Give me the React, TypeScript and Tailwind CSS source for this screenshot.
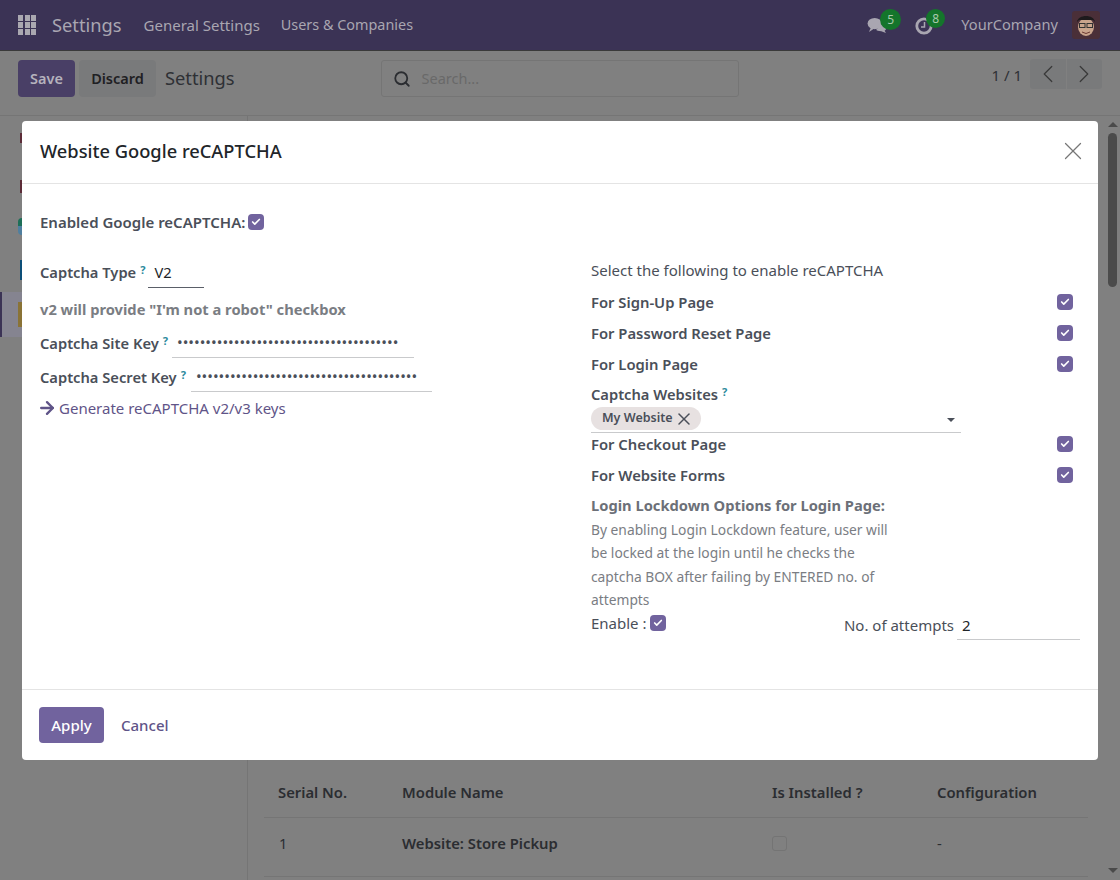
import { Search, ChevronLeft, ChevronRight, X, Check, ArrowRight } from "lucide-react";

const font = "font-['Noto_Sans','Open_Sans',sans-serif]";

function Tick() {
  return (
    <span className="flex h-4 w-4 shrink-0 items-center justify-center rounded-[4px] bg-[#71639e]">
      <Check size={10} strokeWidth={4} className="text-white" />
    </span>
  );
}

function Help() {
  return <sup className="relative -top-[4px] ml-1 text-[11px] font-bold text-[#2b8a9c]">?</sup>;
}

function CheckRow({ label }: { label: string }) {
  return (
    <div className="flex h-[31px] items-center justify-between pr-[7px] text-[14.8px] font-semibold text-[#4a4f59]">
      <span>{label}</span>
      <Tick />
    </div>
  );
}

function Apps() {
  return (
    <div className="grid w-[18px] grid-cols-3 gap-[1.5px]">
      {[0, 1, 2, 3, 4, 5, 6, 7, 8].map((i) => (
        <span key={i} className="h-[5.5px] w-[5px] bg-[#aaa8b0]" />
      ))}
    </div>
  );
}

function Avatar() {
  return (
    <svg width="28" height="28" viewBox="0 0 28 28" className="rounded-[3px]">
      <rect width="28" height="28" fill="#4a2f38" />
      <ellipse cx="14" cy="16" rx="8" ry="9" fill="#c9a48c" />
      <path d="M5 11C6 3 22 3 23 11L21 9H7Z" fill="#1d1a1c" />
      <rect x="7.5" y="12.5" width="5.5" height="4" fill="none" stroke="#333" strokeWidth="1" />
      <rect x="15" y="12.5" width="5.5" height="4" fill="none" stroke="#333" strokeWidth="1" />
      <path d="M10 21Q14 24 18 21" fill="none" stroke="#6b3a33" strokeWidth="1" />
    </svg>
  );
}

export default function App() {
  return (
    <div className={`${font} relative h-[880px] w-[1120px] overflow-hidden bg-[#808080] text-[15px]`}>
      {/* navbar */}
      <div className="flex h-[51px] items-center justify-between border-b border-[#3a3a3a] bg-[#3b3355] pl-[18px] pr-[20px]">
        <div className="flex items-center">
          <Apps />
          <span className="ml-[16px] text-[18.3px] text-[#a9a6b1]">Settings</span>
          <span className="ml-[22px] text-[15px] text-[#a9a6b1]">General Settings</span>
          <span className="ml-[21px] text-[14.4px] text-[#a9a6b1]">Users &amp; Companies</span>
        </div>
        <div className="flex items-center">
          <div className="relative mr-[14px] h-[28px] w-[34px]">
            <svg width="21" height="17" viewBox="0 0 22 18" className="absolute left-0 top-[6px]">
              <ellipse cx="8" cy="7" rx="7.5" ry="6" fill="#a9a6b1" />
              <path d="M4 11L2 16L8 12Z" fill="#a9a6b1" />
              <path d="M12 8.5C17 7 20.5 9 20.5 11.5C20.5 13 19.5 14 18.5 14.5L20 17L15 15C12 15 10 14 9.5 13.5C11 13 12 11 12 8.5Z" fill="#a9a6b1" />
            </svg>
            <span className="absolute -top-[2px] left-[13px] flex h-[21px] w-[21px] items-center justify-center rounded-full bg-[#14752b] text-[12px] text-[#a9c9ac]">5</span>
          </div>
          <div className="relative mr-[15px] h-[28px] w-[31px]">
            <svg width="18" height="18" viewBox="0 0 18 18" className="absolute left-0 top-[6px]">
              <circle cx="9" cy="9" r="7.2" fill="none" stroke="#a9a6b1" strokeWidth="2.8" />
              <path d="M9.5 5V10H6" fill="none" stroke="#a9a6b1" strokeWidth="1.5" />
            </svg>
            <span className="absolute -top-[2px] left-[11px] flex h-[19px] w-[19px] items-center justify-center rounded-full bg-[#14752b] text-[12px] text-[#a9c9ac]">8</span>
          </div>
          <span className="mr-[14px] text-[14.6px] text-[#a9a6b1]">YourCompany</span>
          <Avatar />
        </div>
      </div>

      {/* control panel */}
      <div className="flex h-[65px] items-start border-b border-[#757575] bg-[#808080] pl-[18px] pr-[18px] pt-[9px]">
        <button className="h-[37px] w-[57px] rounded-[4px] bg-[#493f66] text-[14.5px] font-semibold text-[#b5b2bd]">Save</button>
        <button className="ml-[4px] h-[37px] w-[77px] rounded-[4px] bg-[#797a7b] text-[14.5px] font-semibold text-[#1f2023]">Discard</button>
        <span className="ml-[9px] mt-[5px] text-[18.3px] leading-[26px] text-[#2e3035]">Settings</span>
        <div className="ml-[146px] flex h-[37px] w-[358px] items-center rounded-[3px] border border-[#757575] pl-[11px]">
          <Search size={18} strokeWidth={2.4} className="text-[#2b2d31]" />
          <span className="ml-[11px] text-[14.5px] text-[#696969]">Search...</span>
        </div>
        <span className="ml-auto mt-[4px] text-[15px] text-[#2e3035]">1 / 1</span>
        <div className="-mt-[1px] ml-[8px] flex h-[30px] w-[72px] gap-px">
          <span className="flex flex-1 items-center justify-center rounded-l-[3px] bg-[#797a7b]"><ChevronLeft size={30} strokeWidth={1} className="text-[#3a3a3a]" /></span>
          <span className="flex flex-1 items-center justify-center rounded-r-[3px] bg-[#797a7b]"><ChevronRight size={30} strokeWidth={1} className="text-[#3a3a3a]" /></span>
        </div>
      </div>

      {/* page behind the dialog */}
      <div className="flex h-[764px]">
        <div className="relative w-[248px] border-r border-[#757575]">
          <span className="absolute left-[20px] top-[17px] h-[10px] w-[2px] bg-[#5c2c38]" />
          <span className="absolute left-[20px] top-[64px] h-[13px] w-[2px] bg-[#5c2c38]" />
          <span className="absolute left-[18px] top-[102px] h-[8px] w-[4px] rounded-tl-full bg-[#1d6f58]" />
          <span className="absolute left-[18px] top-[110px] h-[9px] w-[4px] rounded-bl-full bg-[#4f7f9f]" />
          <span className="absolute left-[20px] top-[144px] h-[20px] w-[2px] bg-[#0d4f78]" />
          <span className="absolute left-0 top-[176px] h-[45px] w-[22px] border-l-2 border-[#3b3355] bg-[#858490]" />
          <span className="absolute left-[18px] top-[186px] h-[25px] w-[4px] bg-[#8a7336]" />
        </div>
        <div className="flex-1 pl-[16px] pr-[32px] pt-[651px] text-[14.8px] text-[#2b2d31]">
          <div className="flex h-[51px] items-center border-b border-[#757575] font-semibold">
            <span className="ml-[14px] w-[124px]">Serial No.</span>
            <span className="w-[370px]">Module Name</span>
            <span className="w-[165px]">Is Installed ?</span>
            <span>Configuration</span>
          </div>
          <div className="flex h-[59px] items-center border-b border-[#757575] pb-[7px]">
            <span className="ml-[15px] w-[123px] text-[14.5px]">1</span>
            <span className="w-[370px] font-semibold">Website: Store Pickup</span>
            <span className="w-[165px]"><span className="block h-[15px] w-[15px] rounded-[3px] border border-[#747474]" /></span>
            <span>-</span>
          </div>
        </div>
      </div>

      {/* window scrollbar */}
      <div className="absolute right-0 top-[116px] flex h-[764px] w-[15px] flex-col items-center">
        <span className="mt-[6px] h-0 w-0 border-x-[5px] border-b-[5px] border-x-transparent border-b-[#4a4a4a]" />
        <span className="mt-[6px] h-[154px] w-[9px] rounded-full bg-[#4b4b4b]" />
        <span className="mt-auto mb-[7px] h-0 w-0 border-x-[5px] border-t-[5px] border-x-transparent border-t-[#4a4a4a]" />
      </div>

      {/* dialog */}
      <div className="absolute left-[22px] top-[121px] flex h-[639px] w-[1076px] flex-col rounded-[4px] bg-white text-[#4a4f59]">
        <div className="flex h-[63px] items-center justify-between border-b border-[#e4e4e4] pb-[2px] pl-[18px] pr-[10px]">
          <h4 className="text-[18.3px] font-medium text-[#212529]">Website Google reCAPTCHA</h4>
          <X size={30} strokeWidth={1} className="text-[#777]" />
        </div>

        <div className="flex-1 pl-[18px] pr-[17px]">
          <div className="mt-[27px] flex items-center gap-[3px] font-semibold">
            <span>Enabled Google reCAPTCHA:</span>
            <Tick />
          </div>

          <div className="mt-[21px] flex">
            <div className="w-[551px] text-[14.7px]">
              <div className="flex h-[36px] items-center">
                <span className="font-semibold">Captcha Type<Help /></span>
                <span className="ml-[3px] flex h-[30px] w-[56px] items-center border-b border-[#5a5f68] pl-[6px] pt-px text-[#212529]">V2</span>
              </div>
              <div className="mt-[7px] font-bold text-[#7a7d83]">v2 will provide "I'm not a robot" checkbox</div>
              <div className="mt-[8px] flex h-[30px] items-center">
                <span className="font-semibold">Captcha Site Key<Help /></span>
                <span className="ml-[4px] flex h-[30px] w-[242px] items-center overflow-hidden border-b border-[#c9cacc] pl-[5px] pt-px text-[15.1px] text-[#4a4f59]">•••••••••••••••••••••••••••••••••••••••</span>
              </div>
              <div className="mt-[4px] flex h-[30px] items-center">
                <span className="font-semibold">Captcha Secret Key<Help /></span>
                <span className="ml-[5px] flex h-[30px] w-[241px] items-center overflow-hidden border-b border-[#c9cacc] pl-[5px] pt-px text-[15.1px] text-[#4a4f59]">•••••••••••••••••••••••••••••••••••••••</span>
              </div>
              <div className="mt-[5px] flex items-center text-[15px] text-[#5f5488]">
                <ArrowRight size={20} strokeWidth={2.8} className="-mx-[3px] text-[#5f5488]" />
                <span className="ml-[5px]">Generate reCAPTCHA v2/v3 keys</span>
              </div>
            </div>

            <div className="w-[489px] pt-[5.5px]">
              <div className="flex h-[20px] items-center">Select the following to enable reCAPTCHA</div>
              <div className="mt-[6.5px]">
                <CheckRow label="For Sign-Up Page" />
                <CheckRow label="For Password Reset Page" />
                <CheckRow label="For Login Page" />
              </div>
              <div className="mt-[3px] text-[14.7px] font-semibold">Captcha Websites<Help /></div>
              <div className="mt-[1px] flex h-[27px] w-[370px] items-center justify-between border-b border-[#c9cacc] pr-[6px]">
                <span className="flex h-[23px] w-[110px] items-center rounded-full bg-[#e7e1e1] pl-[11px] text-[12.5px] font-semibold">
                  My Website <X size={20} strokeWidth={1.8} className="ml-[1px]" />
                </span>
                <span className="mt-[3px] h-0 w-0 border-x-[4px] border-t-[4px] border-x-transparent border-t-[#4a4f59]" />
              </div>
              <div className="-mt-[4px]">
                <CheckRow label="For Checkout Page" />
                <CheckRow label="For Website Forms" />
              </div>
              <div className="mt-[3px] text-[14.7px] font-bold text-[#6c7078]">Login Lockdown Options for Login Page:</div>
              <div className="mt-[2px] w-[302px] text-[13.8px] leading-[23.5px] text-[#7a7d83]">
                By enabling Login Lockdown feature, user will be locked at the login until he checks the captcha BOX after failing by ENTERED no. of attempts
              </div>
              <div className="flex items-start justify-between">
                <div className="flex items-center gap-[3px]">
                  <span>Enable :</span>
                  <Tick />
                </div>
                <div className="-mt-[2px] flex items-center">
                  <span className="pt-[2px]">No. of attempts</span>
                  <span className="ml-[3px] flex h-[30px] w-[123px] items-center border-b border-[#c9cacc] pl-[5px] pt-[2px] text-[#212529]">2</span>
                </div>
              </div>
            </div>
          </div>
        </div>

        <div className="flex h-[71px] items-center border-t border-[#e4e4e4] pl-[17px]">
          <button className="h-[36px] w-[65px] rounded-[4px] bg-[#71639e] font-medium text-white">Apply</button>
          <span className="ml-[17px] font-medium text-[#5f5488]">Cancel</span>
        </div>
      </div>
    </div>
  );
}
